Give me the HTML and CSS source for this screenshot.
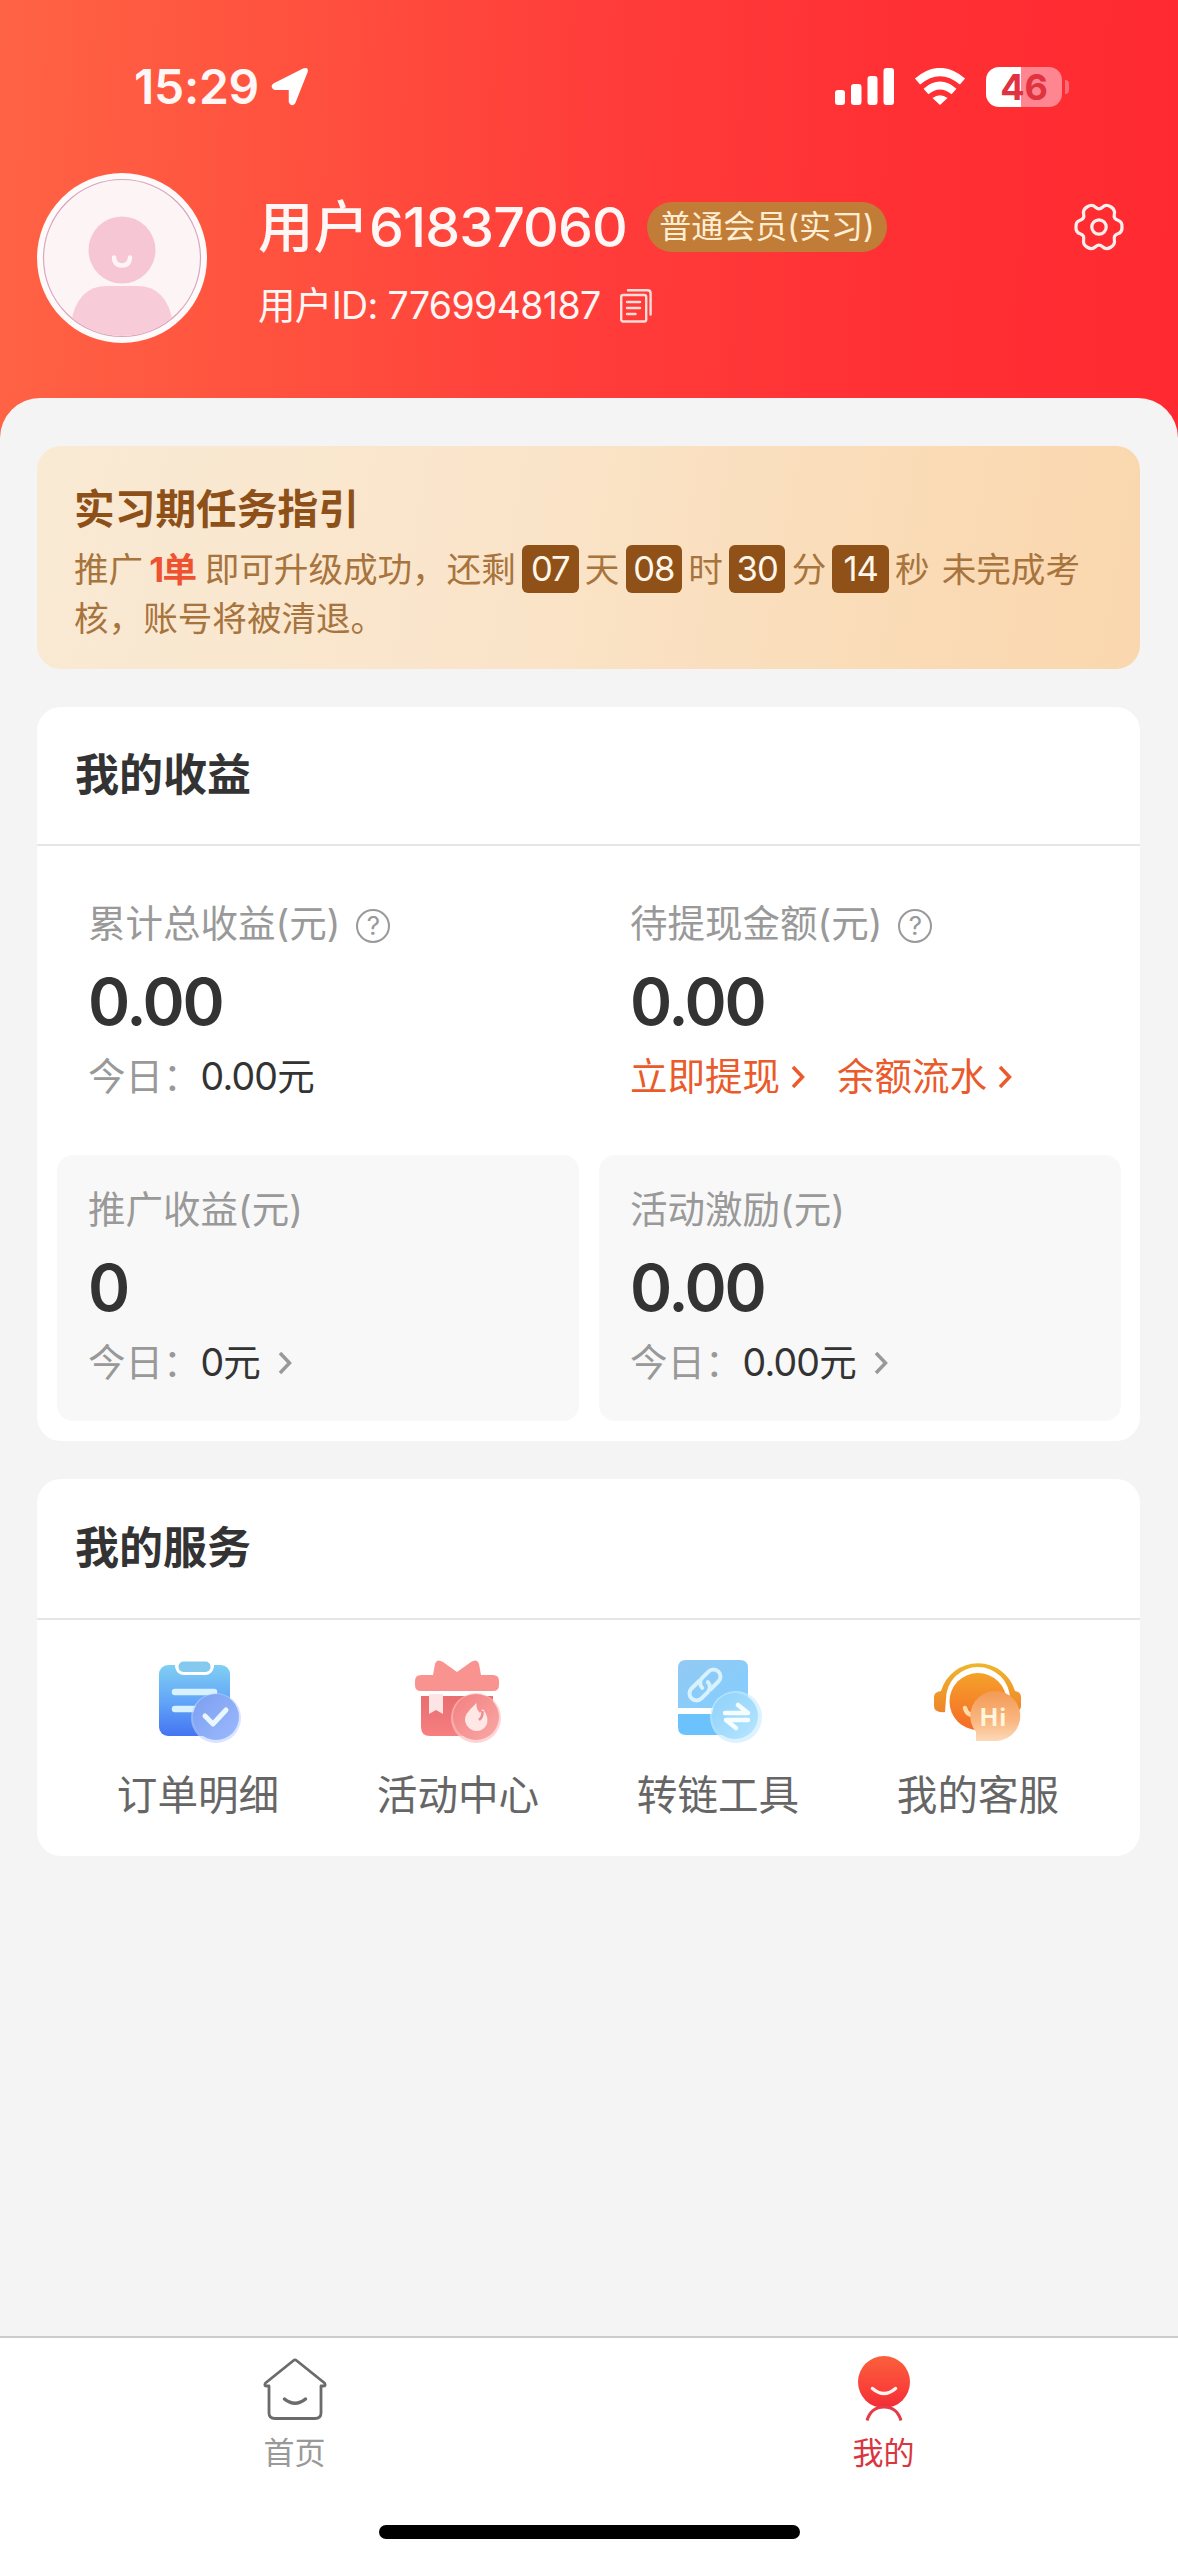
FILE: index.html
```html
<!DOCTYPE html>
<html lang="zh-CN">
<head>
<meta charset="utf-8">
<title>我的</title>
<link rel="stylesheet" href="styles.css">
</head>
<body>
<div class="page">
  <header class="header">
    <div class="status">
      <span class="time">15:29</span>
      <svg class="locate" width="40" height="40" viewBox="0 0 40 40"><path d="M36.500 4.500 24.200 35.500Q22 38.800 20 35V21.800H5Q1 19.800 4.400 17.300L33.600 2.600Q37.500 1.200 36.500 4.500Z" fill="#fff" stroke="#fff" stroke-width="2.500" stroke-linejoin="round"/></svg>
      <div class="indicators">
        <svg width="59" height="38" viewBox="0 0 59 38" fill="#fff"><rect x="0" y="22" width="10" height="15" rx="3"/><rect x="16" y="16" width="10.500" height="21" rx="3"/><rect x="32.500" y="8" width="10" height="29" rx="3"/><rect x="48.500" y="0" width="10.500" height="37" rx="3"/></svg>
        <svg class="wifi" width="52" height="38" viewBox="0 0 52 38" fill="none" stroke="#fff"><path d="M3.500 13.500Q26-5.500 48.500 13.500" stroke-width="8"/><path d="M12 23.500Q26 11.500 40 23.500" stroke-width="7.500"/><path d="M18.500 30Q26 24.500 33.500 30L26 37Z" fill="#fff" stroke="none"/></svg>
        <div class="battery"><span class="battery-level">46</span></div>
        <span class="battery-cap"></span>
      </div>
    </div>
    <div class="profile">
      <svg class="avatar" width="170" height="170" viewBox="0 0 170 170">
        <defs><clipPath id="face"><circle cx="85" cy="85" r="78"/></clipPath></defs>
        <circle cx="85" cy="85" r="85" fill="#fffafa"/>
        <circle cx="85" cy="85" r="78.500" fill="#fdf4f5" stroke="#d9a5bf" stroke-width="1.200"/>
        <g clip-path="url(#face)" fill="#f8cbd8"><circle cx="85" cy="77" r="33.500" fill="#f6c6d4"/><path d="M34 150Q40 113 70 113H100Q130 113 136 150V170H34Z"/></g>
        <path d="M77 84.500Q77.500 92.500 85 92.500T93 84.500" fill="none" stroke="#fff5f6" stroke-width="4.500" stroke-linecap="round"/>
      </svg>
      <div class="identity">
        <div class="name-row">
          <h1 class="name">用户<span class="name-num">61837060</span></h1>
          <span class="level">普通会员(实习)</span>
        </div>
        <div class="id-row">
          <span class="uid">用户ID: 7769948187</span>
          <svg width="32" height="34" viewBox="0 0 32 34" fill="none" stroke="#ffdcd8" stroke-width="2.400" stroke-linecap="round" stroke-linejoin="round"><rect x="1.200" y="6" width="25" height="26.500" rx="2"/><path d="M8 1.300H27.500Q30.600 1.300 30.600 4.500V25.500M7 13H20M7 19H20M7 25H15.500"/></svg>
        </div>
      </div>
      <svg class="gear" width="52" height="52" viewBox="-26 -26 52 52" fill="none" stroke="#fff0ee" stroke-width="3.200" stroke-linejoin="round"><path d="M23 0Q23.400 5.400 18.850 6.800Q14.300 8.250 15.350 12.900Q16.400 17.500 11.700 20.250Q7 23 3.500 19.750Q0 16.500-3.500 19.750Q-7 23-11.700 20.250Q-16.400 17.500-15.350 12.900Q-14.300 8.250-18.850 6.800Q-23.400 5.400-23 0Q-23.400-5.400-18.850-6.800Q-14.300-8.250-15.350-12.900Q-16.400-17.500-11.700-20.250Q-7-23-3.500-19.750Q0-16.500 3.500-19.750Q7-23 11.700-20.250Q16.400-17.500 15.350-12.900Q14.300-8.250 18.850-6.800Q23.400-5.400 23 0Z"/><circle r="7.200"/></svg>
    </div>
  </header>

  <main class="sheet">
    <section class="guide">
      <h2 class="guide-title">实习期任务指引</h2>
      <div class="guide-line">推广<b class="goal">1单</b>即可升级成功，还剩<span class="chip">07</span>天<span class="chip">08</span>时<span class="chip">30</span>分<span class="chip">14</span>秒<span class="warn">未完成考</span></div>
      <div class="guide-line">核，账号将被清退。</div>
    </section>

    <section class="card income">
      <h2 class="card-title">我的收益</h2>
      <div class="stats">
        <div class="stat">
          <div class="stat-label">累计总收益(元)<span class="help">?</span></div>
          <div class="stat-value">0.00</div>
          <div class="stat-foot">今日：<span class="amount"><span class="num">0.00</span>元</span></div>
        </div>
        <div class="stat">
          <div class="stat-label">待提现金额(元)<span class="help">?</span></div>
          <div class="stat-value">0.00</div>
          <div class="stat-foot links">
            <a class="link">立即提现<svg class="arrow" width="14" height="24" viewBox="0 0 14 24"><path d="M2 2 11.500 12 2 22"/></svg></a>
            <a class="link">余额流水<svg class="arrow" width="14" height="24" viewBox="0 0 14 24"><path d="M2 2 11.500 12 2 22"/></svg></a>
          </div>
        </div>
        <div class="stat tile">
          <div class="stat-label">推广收益(元)</div>
          <div class="stat-value">0</div>
          <div class="stat-foot">今日：<span class="amount"><span class="num">0</span>元</span><svg class="arrow more" width="14" height="24" viewBox="0 0 14 24"><path d="M2 2 11.500 12 2 22"/></svg></div>
        </div>
        <div class="stat tile">
          <div class="stat-label">活动激励(元)</div>
          <div class="stat-value">0.00</div>
          <div class="stat-foot">今日：<span class="amount"><span class="num">0.00</span>元</span><svg class="arrow more" width="14" height="24" viewBox="0 0 14 24"><path d="M2 2 11.500 12 2 22"/></svg></div>
        </div>
      </div>
    </section>

    <section class="card">
      <h2 class="card-title services-title">我的服务</h2>
      <div class="services">
        <div class="service">
          <svg width="90" height="88" viewBox="0 0 90 88">
            <defs>
              <linearGradient id="blue" x1="0" y1="0" x2="0" y2="1"><stop offset="0" stop-color="#80cff2"/><stop offset=".5" stop-color="#62a6f8"/><stop offset="1" stop-color="#4574f2"/></linearGradient>
              <linearGradient id="blueDot" x1="0" y1="0" x2="1" y2="1"><stop offset="0" stop-color="#7b9ff0"/><stop offset="1" stop-color="#9cb9fd"/></linearGradient>
            </defs>
            <rect x="6" y="7" width="71" height="71" rx="9" fill="url(#blue)"/>
            <path d="M22 5H61V9Q59 17 52 17H31Q24 17 22 9Z" fill="#fff"/>
            <rect x="25.500" y="3.500" width="32" height="10.500" rx="5" fill="#86c9ee"/>
            <path d="M22 34H61M22 51H45" stroke="#d8f1ff" stroke-width="6.500" stroke-linecap="round"/>
            <circle cx="63" cy="60" r="25" fill="#bfd2ff" opacity=".6"/><circle cx="63" cy="59" r="23" fill="url(#blueDot)"/>
            <path d="M52 58 60 66 73 52" fill="none" stroke="#e9f7ff" stroke-width="5" stroke-linecap="round" stroke-linejoin="round"/>
          </svg>
          <span>订单明细</span>
        </div>
        <div class="service">
          <svg width="90" height="88" viewBox="0 0 90 88">
            <defs>
              <linearGradient id="rose" x1="0" y1="0" x2="0" y2="1"><stop offset="0" stop-color="#e86e70"/><stop offset="1" stop-color="#f77f80"/></linearGradient>
              <linearGradient id="roseDot" x1="0" y1="0" x2="1" y2="1"><stop offset="0" stop-color="#f47f80"/><stop offset="1" stop-color="#f8a9a7"/></linearGradient>
            </defs>
            <path d="M20 17 22 6Q24 0 30 4L44 14 58 4Q64 0 66 6L68 17H80Q86 17 86 23V27Q86 33 80 33H8Q2 33 2 27V23Q2 17 8 17Z" fill="#f99390"/>
            <path d="M8 38H80V69Q80 78 71 78H17Q8 78 8 69Z" fill="url(#rose)"/>
            <path d="M16 36H30V56L23 52 16 56Z" fill="#fde5e5"/>
            <circle cx="63" cy="60" r="25" fill="#fcc3c0" opacity=".7"/><circle cx="63" cy="59" r="23" fill="url(#roseDot)"/>
            <path d="M63.500 45Q57 51 53.500 56 50.500 62 53.500 67 57.500 73 64 73 71 72.500 74 66 76 59 70 51L67 55Q63 51 63.500 45Z" fill="#ffe7e5"/><path d="M66 62Q70 59 69.500 53" stroke="#ec8e91" stroke-width="2.500" fill="none"/>
          </svg>
          <span>活动中心</span>
        </div>
        <div class="service">
          <svg width="90" height="88" viewBox="0 0 90 88">
            <defs>
              <linearGradient id="sky" x1="0" y1="0" x2="1" y2="1"><stop offset="0" stop-color="#92c9f3"/><stop offset="1" stop-color="#84ceff"/></linearGradient>
              <linearGradient id="skyDot" x1="0" y1="0" x2="1" y2="1"><stop offset="0" stop-color="#8ed0fb"/><stop offset="1" stop-color="#b6e6fe"/></linearGradient>
            </defs>
            <path d="M5 50V10Q5 2 13 2H67Q75 2 75 10V50Z" fill="url(#sky)"/>
            <path d="M5 56H75V77H13Q5 77 5 69Z" fill="#6cc2fd"/>
            <g transform="translate(32 27) rotate(-45)" fill="none" stroke="#d8f2ff" stroke-width="4" stroke-linecap="round"><path d="M-1-7H-12A7 7 0 0 0-12 7H-3A7 7 0 0 0 4 0"/><path d="M1 7H12A7 7 0 0 0 12-7H3A7 7 0 0 0-4 0"/></g>
            <circle cx="63" cy="59" r="26" fill="#c9edff" opacity=".65"/><circle cx="62" cy="58" r="23" fill="url(#skyDot)"/>
            <path d="M52 55H75L65 47M75 62H53L63 70" fill="none" stroke="#f5fdff" stroke-width="4.500" stroke-linecap="round" stroke-linejoin="round"/>
          </svg>
          <span>转链工具</span>
        </div>
        <div class="service">
          <svg width="90" height="88" viewBox="0 0 90 88">
            <defs>
              <linearGradient id="amber" x1="0" y1="0" x2="0" y2="1"><stop offset="0" stop-color="#eeb72c"/><stop offset="1" stop-color="#f0842a"/></linearGradient>
              <linearGradient id="amberFace" x1="0" y1="0" x2="0" y2="1"><stop offset="0" stop-color="#f4a22b"/><stop offset="1" stop-color="#f66a26"/></linearGradient>
              <linearGradient id="hiDot" x1="0" y1="0" x2="0" y2="1"><stop offset="0" stop-color="#f49a55"/><stop offset=".6" stop-color="#f9b781"/><stop offset="1" stop-color="#fdd9b8"/></linearGradient>
            </defs>
            <path d="M8 33A38.500 38.500 0 0 1 82 33Q88 34 88 39V48Q88 54 80 54L77 41A32 32 0 0 0 13 41L12 54Q1 55 1 48V39Q1 34 8 33Z" fill="url(#amber)"/>
            <circle cx="45" cy="43.500" r="28.500" fill="url(#amberFace)"/>
            <path d="M32 50Q34 58 42 57" fill="none" stroke="#ffdcae" stroke-width="4.500" stroke-linecap="round"/>
            <path d="M43 83V74A25 25 0 1 1 64 83Z" fill="url(#hiDot)"/>
            <text x="47" y="68" class="hi">Hi</text>
          </svg>
          <span>我的客服</span>
        </div>
      </div>
    </section>
  </main>

  <footer class="footer">
    <nav class="tabs">
      <a class="tab">
        <svg width="66" height="72" viewBox="0 0 66 72" fill="none" stroke="#6b6b6b" stroke-width="2.800" stroke-linejoin="round" stroke-linecap="round"><path d="M31.500 8.500Q33 7.200 34.500 8.500L62.500 31Q64.500 34 61 34H59V61Q59 66.500 53 66.500H13Q7 66.500 7 61V34H5Q1.500 34 3.500 31Z"/><path d="M22.500 47Q33 55.500 43.500 47" stroke-width="3.500"/></svg>
        <span>首页</span>
      </a>
      <a class="tab active">
        <svg width="66" height="72" viewBox="0 0 66 72" fill="none"><defs><linearGradient id="me" x1="0" y1="0" x2="0" y2="1"><stop offset="0" stop-color="#fa603c"/><stop offset=".6" stop-color="#fa4239"/><stop offset="1" stop-color="#f12c36"/></linearGradient></defs><circle cx="33" cy="30" r="26" fill="url(#me)"/><path d="M21.500 36.500Q33 46.500 44.500 36.500" stroke="#fff2ef" stroke-width="3.500" stroke-linecap="round"/><path d="M16 68.500Q20 55 33 55T50 68.500" stroke="#e63b46" stroke-width="3"/></svg>
        <span>我的</span>
      </a>
    </nav>
    <div class="home-bar"></div>
  </footer>
</div>
</body>
</html>
```
FILE: styles.css
```css
* { box-sizing: border-box; }
body { margin: 0; font-family: "Inter", "Noto Sans CJK SC", sans-serif; color: #333; background: #f4f4f4; }
h1, h2 { margin: 0; }
svg { display: block; flex: none; }
.page { display: flex; flex-direction: column; width: 1178px; height: 2560px; overflow: hidden; }

.header { height: 446px; padding-top: 64px; color: #fff7f5; background: linear-gradient(92deg, #ff6345 0%, #ff533f 22%, #ff3d3a 50%, #ff3034 75%, #ff2a31 100%); }
.status { display: flex; align-items: center; height: 46px; padding: 0 109px 0 134px; }
.time { width: 136px; font-size: 48px; font-weight: 600; line-height: 46px; letter-spacing: -.300px; }
.indicators { display: flex; align-items: center; margin-left: auto; }
.wifi { margin-left: 20px; }
.battery { width: 76px; height: 40px; margin-left: 20px; border-radius: 13px; text-align: center; background: linear-gradient(90deg, #fff 35px, #ff8591 35px); }
.battery-level { font-size: 36px; font-weight: 700; line-height: 41px; color: #e0333f; }
.battery-cap { width: 4px; height: 14px; margin-left: 3px; border-radius: 0 5px 5px 0; background: #ff6e78; }

.profile { display: flex; height: 170px; margin-top: 63px; padding: 0 53px 0 37px; }
.identity { margin-left: 51px; padding-top: 24px; }
.name-row { display: flex; align-items: center; height: 60px; }
.name { width: 389px; font-size: 55.5px; font-weight: 500; line-height: 60px; white-space: nowrap; }
.name-num { letter-spacing: -.900px; }
.level { width: 240px; height: 50px; border-radius: 25px; text-align: center; font-size: 32px; line-height: 49px; color: #ffeed4; background: #c17d37; }
.id-row { display: flex; align-items: center; height: 48px; margin-top: 25px; }
.uid { width: 362px; font-size: 37.500px; line-height: 48px; letter-spacing: -.650px; white-space: nowrap; }
.gear { margin: 28px 0 0 auto; }

.sheet { display: flex; flex: 1; flex-direction: column; gap: 38px; margin-top: -48px; padding: 48px 38px 0 37px; border-radius: 40px 40px 0 0; background: #f4f4f4; }
.guide { height: 223px; padding: 42px 37px 0; border-radius: 24px; background: linear-gradient(100deg, #f9ead4 0%, #fae5cb 40%, #fadcb8 75%, #fad7ae 100%); }
.guide-title { margin-bottom: 13px; font-size: 40.700px; font-weight: 700; line-height: 44px; color: #8d5019; }
.guide-line { font-size: 34.600px; line-height: 48.500px; height: 48.500px; white-space: nowrap; color: #a8743d; }
.goal { margin: 0 9px 0 6px; color: #ee5230; letter-spacing: -1.500px; }
.chip { display: inline-block; width: 56.500px; height: 48px; margin: 0 6.200px; border-radius: 6px; vertical-align: top; text-align: center; line-height: 47px; letter-spacing: -1px; color: #fff6ea; background: #8f5118; }
.warn { margin-left: 12px; }

.card { border-radius: 24px; background: #fff; }
.income { height: 734px; }
.card-title { height: 139px; padding-left: 38px; border-bottom: 2px solid #e6e6e6; font-size: 44px; font-weight: 700; line-height: 136px; }
.services-title { height: 141px; line-height: 139px; }
.stats { display: grid; grid-template-columns: 522px 522px; grid-template-rows: 288px 266px; column-gap: 20px; padding: 21px 20px 0; }
.stat { padding: 32px 0 0 31px; }
.tile { border-radius: 16px; background: #f8f8f8; }
.stat-label { display: flex; align-items: center; height: 50px; font-size: 37.500px; line-height: 50px; color: #999; }
.help { width: 34px; height: 34px; margin: 3px 0 0 16px; border: 2.500px solid #999; border-radius: 50%; text-align: center; font-size: 26px; line-height: 29px; }
.stat-value { height: 62px; margin-top: 22px; font-size: 64px; font-weight: 600; line-height: 62px; letter-spacing: -2.300px; }
.tile .stat-label { margin-top: -2px; }
.tile .stat-value { margin-top: 22px; }
.stat-foot { display: flex; align-items: center; height: 50px; margin-top: 19px; font-size: 37.500px; line-height: 50px; color: #999; }
.amount { color: #333; }
.num { letter-spacing: -.800px; }
.links { gap: 32px; }
.link { display: flex; align-items: center; color: #ea5a2a; }
.arrow { margin-left: 11px; fill: none; stroke: currentColor; stroke-width: 3.500; }
.more { margin-left: 17px; }

.services { display: grid; grid-template-columns: repeat(4, 260px); height: 236px; padding: 38px 31px 0; }
.service { display: flex; flex-direction: column; align-items: center; gap: 20px; font-size: 40.600px; line-height: 60px; color: #666; }
.hi { font: 700 24px "Inter", sans-serif; letter-spacing: 1.500px; fill: #fff6dc; }

.footer { height: 224px; border-top: 2px solid #ccc; background: #fff; }
.tabs { display: grid; grid-template-columns: 1fr 1fr; height: 187px; padding-top: 14px; }
.tab { display: flex; flex-direction: column; align-items: center; gap: 9px; font-size: 31px; line-height: 40px; color: #999; }
.active { color: #d93640; }
.home-bar { width: 421px; height: 14px; margin: 0 auto; border-radius: 7px; background: #000; }
```
